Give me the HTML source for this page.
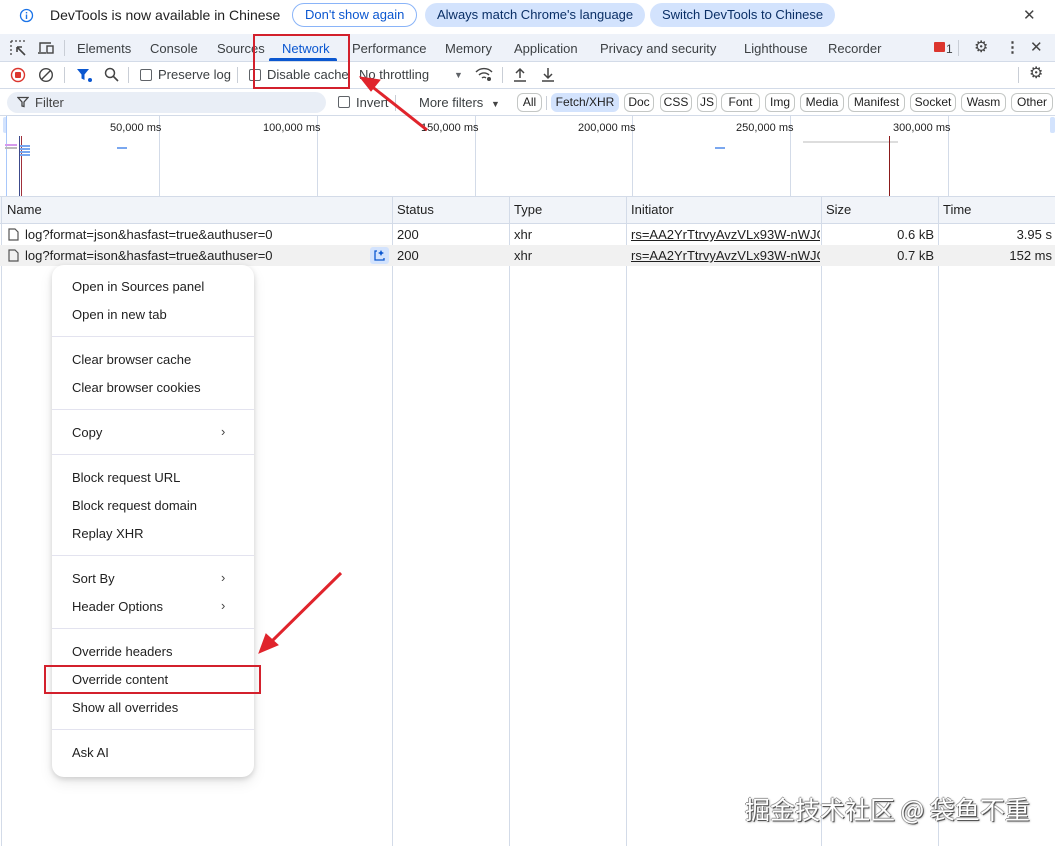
<!DOCTYPE html>
<html><head><meta charset="utf-8"><style>
*{margin:0;padding:0;box-sizing:border-box}
body{width:1055px;height:846px;overflow:hidden;background:#fff;font-family:"Liberation Sans","Noto Sans CJK SC",sans-serif;font-size:13px;color:#1f1f1f;position:relative}
.a{position:absolute;white-space:nowrap;line-height:16px}
.pill{position:absolute;height:24px;border-radius:12px;line-height:24px;font-size:13px;padding:0 12px}
.chip{position:absolute;top:93px;height:19px;border:1px solid #c4c7c5;border-radius:6px;font-size:12px;line-height:17px;text-align:center;color:#1f1f1f}
.vl{position:absolute;width:1px;background:#d3dbe8}
.hl{position:absolute;height:1px;background:#d3dbe8}
.mi{position:absolute;left:72px;line-height:16px;font-size:13px;color:#1f1f1f}
.sep{position:absolute;left:52px;width:202px;height:1px;background:#e3e3ef}
.chev{position:absolute;left:221px;font-size:13px;color:#444}
</style></head><body>
<svg class="a" style="left:19px;top:8px" width="15" height="15" viewBox="0 0 15 15"><circle cx="7.5" cy="7.5" r="6" fill="none" stroke="#1a73e8" stroke-width="1.3"/><rect x="6.8" y="6.5" width="1.4" height="4.5" fill="#1a73e8"/><rect x="6.8" y="4" width="1.4" height="1.4" fill="#1a73e8"/></svg>
<div class="a" style="left:50px;top:7px;font-size:14px">DevTools is now available in Chinese</div>
<div class="pill" style="left:292px;top:3px;border:1px solid #8ab4f8;color:#0b57d0;background:#fff;line-height:22px">Don't show again</div>
<div class="pill" style="left:425px;top:3px;background:#d3e3fd;color:#0a2f66">Always match Chrome's language</div>
<div class="pill" style="left:650px;top:3px;background:#d3e3fd;color:#0a2f66">Switch DevTools to Chinese</div>
<div class="a" style="left:1023px;top:8px;font-size:15px;color:#444">✕</div>
<div style="position:absolute;left:0;top:34px;width:1055px;height:28px;background:#eef2f9;border-bottom:1px solid #d3dbe8"></div>
<svg class="a" style="left:10px;top:40px" width="17" height="17" viewBox="0 0 17 17"><path d="M1 1h2M5 1h2M9 1h2M13 1h2M1 1v2M1 5v2M1 9v2M1 13v2" stroke="#444" stroke-width="1.3" fill="none"/><path d="M7 7l8 8M7 7h5M7 7v5" stroke="#444" stroke-width="1.6" fill="none"/></svg>
<svg class="a" style="left:37px;top:41px" width="18" height="15" viewBox="0 0 18 15"><path d="M3 11V2h11M1 12h8" stroke="#444" stroke-width="1.4" fill="none"/><rect x="10" y="5" width="6" height="7" fill="none" stroke="#444" stroke-width="1.4"/></svg>
<div class="vl" style="left:64px;top:40px;height:16px;background:#c9ced6"></div>
<div class="a" style="left:77px;top:41px;color:#3c4043">Elements</div>
<div class="a" style="left:150px;top:41px;color:#3c4043">Console</div>
<div class="a" style="left:217px;top:41px;color:#3c4043">Sources</div>
<div class="a" style="left:282px;top:41px;color:#0b57d0">Network</div>
<div style="position:absolute;left:269px;top:58px;width:68px;height:3px;background:#0b57d0;border-radius:2px 2px 0 0"></div>
<div class="a" style="left:352px;top:41px;color:#3c4043">Performance</div>
<div class="a" style="left:445px;top:41px;color:#3c4043">Memory</div>
<div class="a" style="left:514px;top:41px;color:#3c4043">Application</div>
<div class="a" style="left:600px;top:41px;color:#3c4043">Privacy and security</div>
<div class="a" style="left:744px;top:41px;color:#3c4043">Lighthouse</div>
<div class="a" style="left:828px;top:41px;color:#3c4043">Recorder</div>
<div style="position:absolute;left:934px;top:42px;width:11px;height:10px;background:#dc362e;border-radius:1px"></div>
<div class="a" style="left:946px;top:41px;color:#3c4043;font-size:12px">1</div>
<div class="vl" style="left:958px;top:40px;height:16px;background:#c9ced6"></div>
<div class="a" style="left:974px;top:40px;font-size:16px;color:#444">⚙</div>
<div class="a" style="left:1005px;top:40px;font-size:15px;color:#444;font-weight:bold">⋮</div>
<div class="a" style="left:1030px;top:40px;font-size:15px;color:#444">✕</div>
<div class="hl" style="left:0;top:88px;width:1055px"></div>
<svg class="a" style="left:10px;top:67px" width="16" height="16"><circle cx="8" cy="8" r="6.5" fill="none" stroke="#dc362e" stroke-width="1.4"/><rect x="5" y="5" width="6" height="6" rx="1" fill="#dc362e"/></svg>
<svg class="a" style="left:38px;top:67px" width="16" height="16"><circle cx="8" cy="8" r="6.3" fill="none" stroke="#444" stroke-width="1.4"/><path d="M3.5 12.5L12.5 3.5" stroke="#444" stroke-width="1.4"/></svg>
<div class="vl" style="left:64px;top:67px;height:16px;background:#c9ced6"></div>
<svg class="a" style="left:76px;top:67px" width="17" height="16"><path d="M1 2h12l-4.5 5.5V13l-3-1.5V7.5z" fill="#0b57d0"/><circle cx="14" cy="13" r="2" fill="#0b57d0"/></svg>
<svg class="a" style="left:104px;top:67px" width="15" height="15"><circle cx="6" cy="6" r="4.5" fill="none" stroke="#444" stroke-width="1.5"/><path d="M9.5 9.5L14 14" stroke="#444" stroke-width="1.6"/></svg>
<div class="vl" style="left:128px;top:67px;height:16px;background:#c9ced6"></div>
<div style="position:absolute;left:140px;top:69px;width:12px;height:12px;border:1px solid #5f6368;border-radius:2px"></div>
<div class="a" style="left:158px;top:67px;color:#3c4043">Preserve log</div>
<div class="vl" style="left:237px;top:67px;height:16px;background:#c9ced6"></div>
<div style="position:absolute;left:249px;top:69px;width:12px;height:12px;border:1px solid #5f6368;border-radius:2px"></div>
<div class="a" style="left:267px;top:67px;color:#3c4043">Disable cache</div>
<div class="a" style="left:359px;top:67px;color:#3c4043">No throttling</div>
<div class="a" style="left:454px;top:67px;color:#5f6368;font-size:9px">▼</div>
<svg class="a" style="left:475px;top:67px" width="18" height="15"><path d="M1 5a11 11 0 0 1 16 0M4 8a7 7 0 0 1 10 0M7 11a3 3 0 0 1 4 0" stroke="#444" stroke-width="1.4" fill="none"/><circle cx="14" cy="12" r="2" fill="#444"/></svg>
<div class="vl" style="left:502px;top:67px;height:16px;background:#c9ced6"></div>
<svg class="a" style="left:513px;top:67px" width="14" height="15"><path d="M7 11V2M3 6l4-4 4 4M1 14h12" stroke="#444" stroke-width="1.5" fill="none"/></svg>
<svg class="a" style="left:541px;top:67px" width="14" height="15"><path d="M7 1v10M3 7l4 4 4-4M1 14h12" stroke="#444" stroke-width="1.5" fill="none"/></svg>
<div class="vl" style="left:1018px;top:67px;height:16px;background:#c9ced6"></div>
<div class="a" style="left:1029px;top:66px;font-size:16px;color:#444">⚙</div>
<div class="hl" style="left:0;top:115px;width:1055px"></div>
<div style="position:absolute;left:7px;top:92px;width:319px;height:21px;background:#e9eef6;border-radius:11px"></div>
<svg class="a" style="left:17px;top:96px" width="12" height="12"><path d="M1 1.5h10L7 6v4.5L5 10V6z" fill="none" stroke="#444" stroke-width="1.3"/></svg>
<div class="a" style="left:35px;top:95px;color:#444">Filter</div>
<div style="position:absolute;left:338px;top:96px;width:12px;height:12px;border:1px solid #5f6368;border-radius:2px"></div>
<div class="a" style="left:356px;top:95px;color:#3c4043">Invert</div>
<div class="vl" style="left:395px;top:95px;height:16px;background:#c9ced6"></div>
<div class="a" style="left:419px;top:95px;color:#3c4043">More filters</div>
<div class="a" style="left:491px;top:96px;color:#444;font-size:9px">▼</div>
<div class="chip" style="left:517px;width:25px">All</div>
<div class="vl" style="left:546px;top:96px;height:14px;background:#c9ced6"></div>
<div class="chip" style="left:551px;width:68px;background:#d3e3fd;border-color:#d3e3fd">Fetch/XHR</div>
<div class="chip" style="left:624px;width:30px">Doc</div>
<div class="chip" style="left:660px;width:32px">CSS</div>
<div class="chip" style="left:697px;width:20px">JS</div>
<div class="chip" style="left:721px;width:39px">Font</div>
<div class="chip" style="left:765px;width:30px">Img</div>
<div class="chip" style="left:800px;width:44px">Media</div>
<div class="chip" style="left:848px;width:57px">Manifest</div>
<div class="chip" style="left:910px;width:46px">Socket</div>
<div class="chip" style="left:961px;width:45px">Wasm</div>
<div class="chip" style="left:1011px;width:42px">Other</div>
<div style="position:absolute;left:3px;top:117px;width:4px;height:16px;background:#d3e3fd;border-radius:2px"></div>
<div style="position:absolute;left:1050px;top:117px;width:5px;height:16px;background:#d3e3fd;border-radius:2px"></div>
<div class="vl" style="left:6px;top:116px;height:80px;background:#a8c7fa"></div>
<div class="vl" style="left:159px;top:116px;height:80px"></div>
<div class="vl" style="left:317px;top:116px;height:80px"></div>
<div class="vl" style="left:475px;top:116px;height:80px"></div>
<div class="vl" style="left:632px;top:116px;height:80px"></div>
<div class="vl" style="left:790px;top:116px;height:80px"></div>
<div class="vl" style="left:948px;top:116px;height:80px"></div>
<div class="a" style="left:110px;top:120px;font-size:11px">50,000 ms</div>
<div class="a" style="left:263px;top:120px;font-size:11px">100,000 ms</div>
<div class="a" style="left:421px;top:120px;font-size:11px">150,000 ms</div>
<div class="a" style="left:578px;top:120px;font-size:11px">200,000 ms</div>
<div class="a" style="left:736px;top:120px;font-size:11px">250,000 ms</div>
<div class="a" style="left:893px;top:120px;font-size:11px">300,000 ms</div>
<div style="position:absolute;left:5px;top:144px;width:12px;height:2px;background:#d59aec"></div>
<div style="position:absolute;left:5px;top:147px;width:12px;height:2px;background:#bbb"></div>
<div style="position:absolute;left:19px;top:136px;width:1px;height:60px;background:#3c4a8c"></div>
<div style="position:absolute;left:21px;top:136px;width:1px;height:60px;background:#a0303a"></div>
<div style="position:absolute;left:20px;top:145px;width:10px;height:12px;background:repeating-linear-gradient(#7aa7ef 0 2px,transparent 2px 3px)"></div>
<div style="position:absolute;left:117px;top:147px;width:10px;height:2px;background:#7aa7ef"></div>
<div style="position:absolute;left:715px;top:147px;width:10px;height:2px;background:#7aa7ef"></div>
<div style="position:absolute;left:803px;top:141px;width:95px;height:2px;background:#ddd"></div>
<div style="position:absolute;left:889px;top:136px;width:1px;height:60px;background:#8b1a1a"></div>
<div style="position:absolute;left:0;top:196px;width:1055px;height:28px;background:#f1f4f9;border-top:1px solid #d3dbe8;border-bottom:1px solid #d3dbe8"></div>
<div class="vl" style="left:392px;top:196px;height:650px"></div>
<div class="vl" style="left:509px;top:196px;height:650px"></div>
<div class="vl" style="left:626px;top:196px;height:650px"></div>
<div class="vl" style="left:821px;top:196px;height:650px"></div>
<div class="vl" style="left:938px;top:196px;height:650px"></div>
<div class="vl" style="left:1px;top:196px;height:650px"></div>
<div class="a" style="left:7px;top:202px;color:#1f1f1f">Name</div>
<div class="a" style="left:397px;top:202px">Status</div>
<div class="a" style="left:514px;top:202px">Type</div>
<div class="a" style="left:631px;top:202px">Initiator</div>
<div class="a" style="left:826px;top:202px">Size</div>
<div class="a" style="left:943px;top:202px">Time</div>
<div style="position:absolute;left:0;top:245px;width:1055px;height:21px;background:#f1f1f1"></div>
<svg class="a" style="left:8px;top:228px" width="11" height="13"><path d="M1 1h6l3 3v8H1z" fill="none" stroke="#555" stroke-width="1.2"/></svg>
<svg class="a" style="left:8px;top:249px" width="11" height="13"><path d="M1 1h6l3 3v8H1z" fill="none" stroke="#555" stroke-width="1.2"/></svg>
<div class="a" style="left:25px;top:227px">log?format=json&amp;hasfast=true&amp;authuser=0</div>
<div class="a" style="left:25px;top:248px">log?format=ison&amp;hasfast=true&amp;authuser=0</div>
<div style="position:absolute;left:370px;top:247px;width:19px;height:17px;background:#d3e3fd;border-radius:3px"></div>
<svg class="a" style="left:373px;top:249px" width="13" height="13"><path d="M4 2H2v9h9V9" fill="none" stroke="#0b57d0" stroke-width="1.3"/><path d="M8 1l1 2 2 1-2 1-1 2-1-2-2-1 2-1z" fill="#0b57d0"/></svg>
<div class="a" style="left:397px;top:227px">200</div><div class="a" style="left:397px;top:248px">200</div>
<div class="a" style="left:514px;top:227px">xhr</div><div class="a" style="left:514px;top:248px">xhr</div>
<div class="a" style="left:631px;top:227px;width:189px;overflow:hidden;text-decoration:underline">rs=AA2YrTtrvyAvzVLx93W-nWJG0</div>
<div class="a" style="left:631px;top:248px;width:189px;overflow:hidden;text-decoration:underline">rs=AA2YrTtrvyAvzVLx93W-nWJG0</div>
<div class="a" style="left:826px;top:227px;width:108px;text-align:right">0.6 kB</div>
<div class="a" style="left:826px;top:248px;width:108px;text-align:right">0.7 kB</div>
<div class="a" style="left:943px;top:227px;width:109px;text-align:right">3.95 s</div>
<div class="a" style="left:943px;top:248px;width:109px;text-align:right">152 ms</div>
<div style="position:absolute;left:52px;top:265px;width:202px;height:512px;background:#fff;border-radius:12px;box-shadow:0 2px 6px rgba(0,0,0,.15),0 6px 14px rgba(0,0,0,.08)"></div>
<div class="mi" style="top:279px">Open in Sources panel</div>
<div class="mi" style="top:307px">Open in new tab</div>
<div class="sep" style="top:336px"></div>
<div class="mi" style="top:352px">Clear browser cache</div>
<div class="mi" style="top:380px">Clear browser cookies</div>
<div class="sep" style="top:409px"></div>
<div class="mi" style="top:425px">Copy</div><div class="chev" style="top:424px">›</div>
<div class="sep" style="top:454px"></div>
<div class="mi" style="top:470px">Block request URL</div>
<div class="mi" style="top:498px">Block request domain</div>
<div class="mi" style="top:526px">Replay XHR</div>
<div class="sep" style="top:555px"></div>
<div class="mi" style="top:571px">Sort By</div><div class="chev" style="top:570px">›</div>
<div class="mi" style="top:599px">Header Options</div><div class="chev" style="top:598px">›</div>
<div class="sep" style="top:628px"></div>
<div class="mi" style="top:644px">Override headers</div>
<div class="mi" style="top:672px">Override content</div>
<div class="mi" style="top:700px">Show all overrides</div>
<div class="sep" style="top:729px"></div>
<div class="mi" style="top:745px">Ask AI</div>
<div style="position:absolute;left:253px;top:34px;width:97px;height:55px;border:2px solid #d3202c"></div>
<div style="position:absolute;left:44px;top:665px;width:217px;height:29px;border:2px solid #d3202c"></div>
<svg style="position:absolute;left:0;top:0" width="1055" height="846"><g stroke="#e0242c" stroke-width="3" fill="#e0242c"><line x1="427" y1="130" x2="370" y2="85"/><path d="M360 77l20 3-9 11z" stroke-width="1"/><line x1="341" y1="573" x2="270" y2="643"/><path d="M259 653l7-19 12 11z" stroke-width="1"/></g></svg>
<div class="a" style="left:745px;top:795px;font-size:25px;line-height:28px;color:#fff;font-family:'Noto Sans CJK SC',sans-serif;text-shadow:1px 1px 0 #555,-1px 0 0 #999,0 -1px 0 #999,1px 1px 2px #777">掘金技术社区 @ 袋鱼不重</div>
</body></html>
